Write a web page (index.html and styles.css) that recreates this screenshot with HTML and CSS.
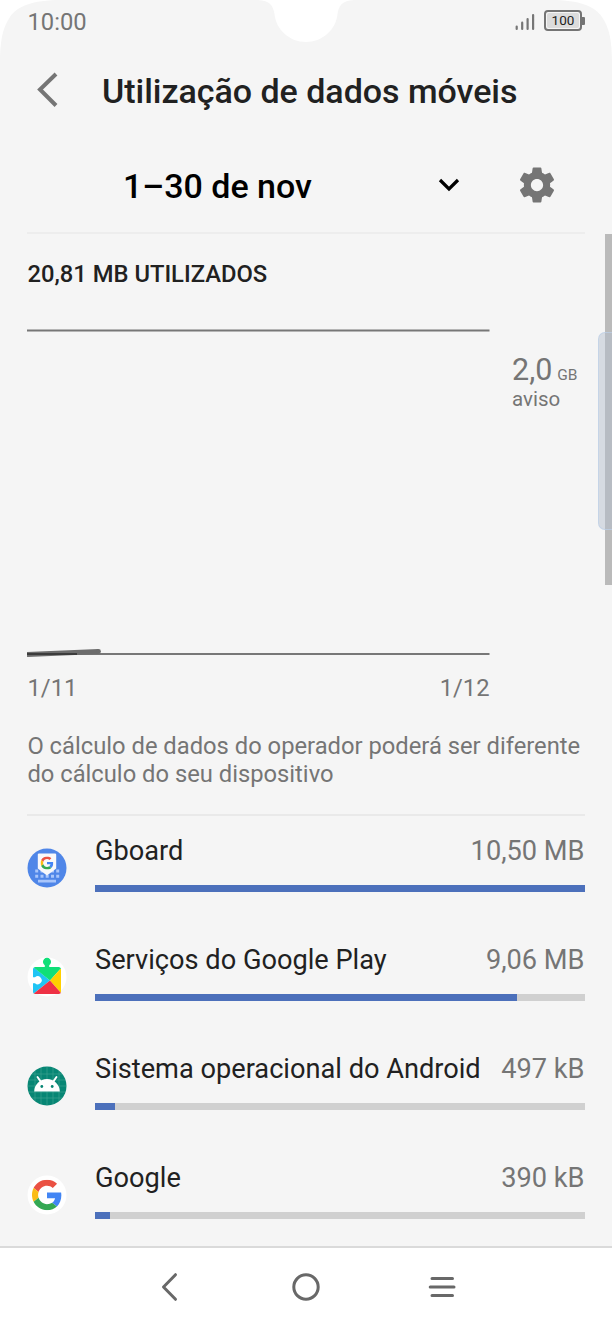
FILE: index.html
```html
<!DOCTYPE html>
<html lang="pt">
<head>
<meta charset="utf-8">
<title>Utilização de dados móveis</title>
<link rel="stylesheet" href="styles.css">
</head>
<body>
<div class="screen">
  <svg class="cutout" width="612" height="70" viewBox="0 0 612 70">
    <path d="M0 0H56C28 1 16 8 10 17C2 29 0 42 0 64Z"/>
    <path d="M612 0H556C584 1 596 8 602 17C610 29 612 42 612 64Z"/>
    <path d="M258 0C270 1 273 5 274.500 14C276 30 290 42 306 42C322 42 336 30 337.500 14C339 5 342 1 354 0Z"/>
  </svg>

  <div class="status">
    <span class="clock">10:00</span>
    <div class="status-icons">
      <svg width="20" height="18" viewBox="0 0 20 18" stroke="#767676" stroke-width="2.200" stroke-linecap="round"><path d="M1.700 13.500V16M7.200 9.700V16M12.600 6V16M18.100 2V16"/></svg>
      <div class="battery"><span>100</span></div>
    </div>
  </div>

  <header class="header">
    <svg width="24" height="36" viewBox="0 0 24 36" fill="none" stroke="#757575" stroke-width="4"><path d="M20 2L4 17.500L20 33.500"/></svg>
    <h1>Utilização de dados móveis</h1>
  </header>

  <main>
    <section class="cycle">
      <span class="cycle-label">1–30 de nov</span>
      <svg class="chevron" width="22" height="16" viewBox="0 0 22 16" fill="none" stroke="#000" stroke-width="3.200"><path d="M2 3L11 12L20 3"/></svg>
      <svg class="gear" width="42" height="42" viewBox="0 0 24 24" fill="#757575"><path d="M19.430 12.980c.04-.32.07-.64.07-.98s-.03-.66-.07-.98l2.110-1.650c.19-.15.24-.42.12-.64l-2-3.460c-.12-.22-.39-.3-.61-.22l-2.490 1c-.52-.4-1.080-.73-1.690-.98l-.38-2.650C14.460 2.180 14.250 2 14 2h-4c-.25 0-.46.18-.49.42l-.38 2.650c-.61.25-1.170.59-1.690.98l-2.490-1c-.23-.09-.49 0-.61.22l-2 3.460c-.13.22-.07.49.12.64l2.110 1.650c-.04.32-.07.65-.07.98s.03.66.07.98l-2.110 1.650c-.19.15-.24.42-.12.64l2 3.460c.12.22.39.3.61.22l2.490-1c.52.4 1.080.73 1.690.98l.38 2.650c.03.24.24.42.49.42h4c.25 0 .46-.18.49-.42l.38-2.650c.61-.25 1.170-.59 1.690-.98l2.490 1c.23.09.49 0 .61-.22l2-3.460c.12-.22.07-.49-.12-.64l-2.110-1.650zM12 15.500c-1.930 0-3.500-1.570-3.500-3.500s1.570-3.500 3.500-3.500 3.500 1.570 3.500 3.500-1.570 3.500-3.500 3.500z"/></svg>
    </section>

    <section class="usage">
      <h2>20,81 MB UTILIZADOS</h2>
      <div class="chart">
        <div class="plot">
          <svg width="463" height="330" viewBox="0 0 463 330">
            <path d="M0 1.500H462.500M0 325H462.500" stroke="#777" stroke-width="1.800"/>
            <path d="M0 325.500L71.500 322.500" stroke="#6c6c6c" stroke-width="4.800"/>
            <circle cx="71.500" cy="322.500" r="2.400" fill="#6c6c6c"/>
            <path d="M0 325H50" stroke="#3c3c3c" stroke-width="1.800"/>
          </svg>
          <div class="dates"><span>1/11</span><span>1/12</span></div>
        </div>
        <div class="warning"><div class="limit">2,0<small>GB</small></div><div class="aviso">aviso</div></div>
      </div>
      <p class="note">O cálculo de dados do operador poderá ser diferente<br>do cálculo do seu dispositivo</p>
    </section>

    <ul class="apps">
      <li>
        <svg class="icon" viewBox="0 0 40 40">
          <circle cx="20" cy="20" r="19.500" fill="#4f86e8"/>
          <g fill="#a9c6fb"><path d="M8.200 21.500h3v3h-3zM13.500 21.500h3v3h-3zM24 21.500h3v3h-3zM29.200 21.500h3v3h-3zM8.200 26.700h3v3h-3zM13.500 26.700h3v3h-3zM18.700 26.700h3v3h-3zM24 26.700h3v3h-3zM29.200 26.700h3v3h-3zM11 31.800h18v2.800H11z"/></g>
          <path d="M12 5.500H28a1.200 1.200 0 0 1 1.200 1.200V20.500L20 27.500L10.800 20.500V6.700A1.200 1.200 0 0 1 12 5.500Z" fill="#f8f8fa"/>
          <svg x="13.500" y="8.500" width="13" height="13" viewBox="0 0 48 48"><use href="#g"/></svg>
        </svg>
        <div class="app"><div class="line"><span>Gboard</span><span class="amount">10,50 MB</span></div><div class="track"><div class="fill" style="width:100%"></div></div></div>
      </li>
      <li>
        <svg class="icon" viewBox="0 0 40 40">
          <defs><clipPath id="piece"><path d="M8.500 10H17.800V8.200A4 4 0 1 1 22.200 8.200V10H31.500A2.500 2.500 0 0 1 34 12.500V34.500A2.500 2.500 0 0 1 31.500 37H8.500A2.500 2.500 0 0 1 6 34.500V26.200H8A4 4 0 1 0 8 20.200H6V12.500A2.500 2.500 0 0 1 8.500 10Z"/></clipPath></defs>
          <circle cx="20" cy="20" r="19.500" fill="#fff"/>
          <g clip-path="url(#piece)"><path d="M5 9V38L23 23.500Z" fill="#20c4f4"/><path d="M5 0H35V10L23 23.500L6 10Z" fill="#10df78"/><path d="M35 10L23 23.500L35 37Z" fill="#ffd000"/><path d="M5 38L23 23.500L35 37V38Z" fill="#ee3145"/></g>
        </svg>
        <div class="app"><div class="line"><span>Serviços do Google Play</span><span class="amount">9,06 MB</span></div><div class="track"><div class="fill" style="width:86.200%"></div></div></div>
      </li>
      <li>
        <svg class="icon" viewBox="0 0 40 40">
          <circle cx="20" cy="20" r="19.500" fill="#078674"/>
          <path d="M8 5V35M14 2V38M20 1V39M26 2V38M32 5V35M5 8H35M2 14H38M1 20H39M2 26H38M5 32H35" stroke="#3ba091" stroke-width=".7"/>
          <path d="M10.500 11L14 16M29.500 11L26 16" stroke="#fff" stroke-width="2" stroke-linecap="round"/>
          <path d="M7.200 25.500A12.800 12.500 0 0 1 32.800 25.500Z" fill="#fff"/><circle cx="14.800" cy="20.500" r="1.400" fill="#078674"/><circle cx="25.200" cy="20.500" r="1.400" fill="#078674"/>
        </svg>
        <div class="app"><div class="line"><span>Sistema operacional do Android</span><span class="amount">497 kB</span></div><div class="track"><div class="fill" style="width:4.100%"></div></div></div>
      </li>
      <li>
        <svg class="icon" viewBox="0 0 40 40">
          <defs><g id="g"><path fill="#ea5143" d="M24 9.500c3.540 0 6.710 1.220 9.210 3.600l6.850-6.850C35.900 2.380 30.470 0 24 0 14.620 0 6.510 5.380 2.560 13.220l7.980 6.190C12.430 13.720 17.740 9.500 24 9.500z"/><path fill="#4285f4" d="M46.980 24.550c0-1.570-.15-3.090-.38-4.550H24v9.020h12.940c-.58 2.960-2.260 5.480-4.780 7.180l7.730 6c4.510-4.180 7.090-10.360 7.090-17.650z"/><path fill="#fbbc15" d="M10.530 28.590c-.48-1.450-.76-2.990-.76-4.590s.27-3.140.76-4.590l-7.980-6.190C.92 16.460 0 20.120 0 24c0 3.880.92 7.540 2.560 10.780l7.970-6.190z"/><path fill="#34a853" d="M24 48c6.480 0 11.930-2.130 15.890-5.810l-7.730-6c-2.150 1.450-4.920 2.300-8.160 2.300-6.260 0-11.570-4.220-13.470-9.910l-7.980 6.190C6.510 42.620 14.620 48 24 48z"/></g></defs>
          <circle cx="20" cy="20" r="19.500" fill="#fff"/>
          <svg x="5" y="4.700" width="30" height="30.500" viewBox="0 0 48 48" preserveAspectRatio="none"><use href="#g"/></svg>
        </svg>
        <div class="app"><div class="line"><span>Google</span><span class="amount">390 kB</span></div><div class="track"><div class="fill" style="width:3.100%"></div></div></div>
      </li>
    </ul>
  </main>

  <nav class="navbar">
    <svg width="20" height="30" viewBox="0 0 20 30"><path d="M15.500 2.700L3.500 15L15.500 27.300"/></svg>
    <svg class="home" width="30" height="30" viewBox="0 0 30 30"><circle cx="15" cy="15" r="12.200"/></svg>
    <svg width="30" height="30" viewBox="0 0 30 30"><path d="M5 6.500H25.500M3.200 15H27M5 23.500H25.500"/></svg>
  </nav>

  <div class="scrollbar"></div>
  <div class="edge-handle"></div>
</div>
</body>
</html>
```
FILE: styles.css
```css
* { box-sizing: border-box; }
body { margin: 0; background: #fff; font-family: Roboto, sans-serif; color: #212121; }
svg { display: block; flex: none; }
h1, h2, p, ul { margin: 0; padding: 0; }
.screen { position: relative; width: 612px; height: 1328px; background: #f5f5f5; overflow: hidden; display: flex; flex-direction: column; white-space: nowrap; }
.cutout { position: absolute; top: 0; left: 0; fill: #fff; }
.status { position: relative; height: 44px; padding: 0 30px 0 27.500px; display: flex; justify-content: space-between; }
.clock { font-size: 23.750px; line-height: 44px; color: #757575; }
.status-icons { display: flex; align-items: flex-start; gap: 9px; padding-top: 10.400px; }
.status-icons svg { margin-top: 3px; }
.battery { position: relative; width: 38px; height: 21px; border: 2px solid #747474; border-radius: 4px; padding: 1px; }
.battery::after { content: ""; position: absolute; right: -5px; top: 5px; width: 3px; height: 8px; background: #747474; border-radius: 0 1px 1px 0; }
.battery span { display: block; height: 15px; background: #dcdcdc; border-radius: 2px; font-size: 13.500px; line-height: 15px; text-align: center; color: #222; }
.header { height: 92px; padding: 28px 0 0 36px; display: flex; align-items: flex-start; gap: 42px; }
h1 { font-size: 34px; font-weight: 500; line-height: 38px; letter-spacing: -.03px; }
main { padding: 0 27.500px 0 27px; height: 1110px; }
.cycle { height: 98px; border-bottom: 2px solid #ededed; display: flex; align-items: center; padding-left: 96px; }
.cycle-label { font-size: 34px; font-weight: 500; line-height: 40px; color: #000; width: 315px; padding-top: 3px; }
.chevron { margin-top: 2px; }
.gear { margin: 2px 0 0 56px; }
.usage { height: 582px; border-bottom: 2px solid #e9e9e9; padding-top: 25px; }
h2 { font-size: 23.750px; font-weight: 500; line-height: 30px; padding-left: .5px; }
.chart { display: flex; gap: 22px; padding-top: 40px; }
.plot { width: 463px; }
.dates { display: flex; justify-content: space-between; font-size: 23.750px; line-height: 30px; color: #757575; padding: 14px .5px 0; }
.warning { color: #757575; padding-top: 23px; }
.limit { font-size: 30.500px; line-height: 36px; }
.limit small { font-size: 15.500px; margin-left: 5px; }
.aviso { font-size: 20.500px; line-height: 24px; margin-top: -6px; }
.note { font-size: 23.750px; line-height: 28px; color: #757575; padding: 29px 0 0 .4px; }
.apps { list-style: none; padding-top: 17px; }
.apps li { display: flex; height: 109px; align-items: flex-start; }
.icon { width: 40px; height: 40px; margin: 15px 28px 0 0; }
.app { flex: 1; }
.line { display: flex; justify-content: space-between; font-size: 27.200px; line-height: 36px; }
.amount { color: #757575; }
.track { height: 7px; margin-top: 16px; background: #d0d0d0; }
.fill { height: 100%; background: #4c70bb; }
.navbar { height: 82px; border-top: 2px solid #dadada; background: #fff; display: flex; align-items: center; padding: 0 155px 2px 160px; justify-content: space-between; }
.navbar svg { fill: none; stroke: #686868; stroke-width: 3; stroke-linecap: round; stroke-linejoin: round; }
.navbar .home { margin-left: 5px; }
.scrollbar { position: absolute; right: 0; top: 234px; width: 7px; height: 351px; background: #bababa; }
.edge-handle { position: absolute; right: -2px; top: 332px; width: 16px; height: 198px; background: rgba(180, 190, 205, .48); border: 1px solid rgba(190, 208, 232, .7); border-radius: 7px 0 0 7px; }
```
